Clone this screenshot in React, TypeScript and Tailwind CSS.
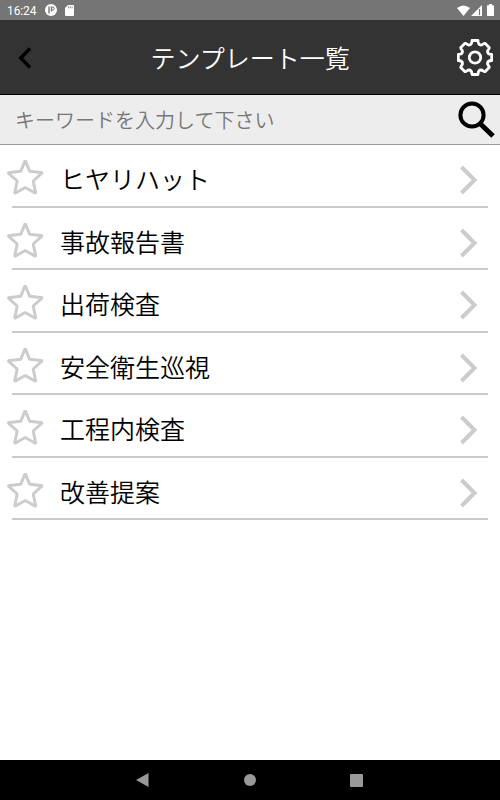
const templates = [
  { id: 1, title: "ヒヤリハット" },
  { id: 2, title: "事故報告書" },
  { id: 3, title: "出荷検査" },
  { id: 4, title: "安全衛生巡視" },
  { id: 5, title: "工程内検査" },
  { id: 6, title: "改善提案" },
];

const StatusBar = () => (
  <div className="flex h-5 items-center bg-[#757575] pl-[7px] pr-[6px] text-white">
    <span className="w-[29px] pt-0.5 font-[Roboto] text-[12px] leading-[18px] tracking-[-0.1px]">16:24</span>
    <svg className="ml-[9px]" width="12" height="12" viewBox="0 0 12 12">
      <circle cx="6" cy="6" r="6" fill="#fff" />
      <path d="M4 2.500v7M6.500 2.500v5" fill="none" stroke="#757575" strokeWidth="1.400" />
      <path d="M6.500 3h1.300a1.500 1.500 0 0 1 0 3H6.500" fill="none" stroke="#757575" strokeWidth="1" />
    </svg>
    <svg className="ml-2" width="9" height="11" viewBox="0 0 9 11">
      <path d="M3 0h5a1 1 0 0 1 1 1v9a1 1 0 0 1-1 1H1a1 1 0 0 1-1-1V3z" fill="#fff" />
      <path d="M3.500 1.300v2M5.300 1.300v2M7.100 1.300v2" stroke="#757575" strokeWidth=".8" />
    </svg>
    <svg className="ml-auto" width="13" height="11" viewBox="0 0 13 11">
      <path d="M6.500 11 0 3Q6.500-2 13 3z" fill="#fff" />
    </svg>
    <svg className="ml-px" width="11" height="11" viewBox="0 0 11 11">
      <path d="M11 0v11H0z" fill="#fff" />
      <path d="M8.500 4v6" stroke="#757575" strokeWidth="1.200" />
    </svg>
    <svg className="ml-[5px]" width="7" height="12" viewBox="0 0 7 12">
      <path d="M2 0h3v1.300h1.300q.7 0 .7.7v9.300q0 .7-.7.7H.7q-.7 0-.7-.7V2q0-.7.7-.7H2z" fill="#fff" />
    </svg>
  </div>
);

const Header = () => (
  <header className="flex h-[75px] items-center border-b border-black bg-[#333] pl-[18px] pr-[7px]">
    <svg className="mt-px" width="32" height="22" viewBox="0 0 32 22">
      <path d="M12 1.500 2.700 11l9.300 9.500" fill="none" stroke="#000" strokeWidth="3.400" />
    </svg>
    <h1 className="ml-[100.5px] text-[25px] font-[350] leading-9 text-white">テンプレート一覧</h1>
    <svg
      className="ml-auto mt-px"
      width="36"
      height="37"
      viewBox="-18 -18.500 36 37"
      fill="none"
      stroke="#fff"
      strokeWidth="2.800"
      strokeLinejoin="round"
    >
      <path d="M-3-17H3Q3.200-12.500 6-12.500C8-12.500 8.500-14.500 10-14.200L14.200-10C14.500-8.500 12.500-8 12.500-6Q12.500-3.200 16.700-3V3Q12.500 3.200 12.500 6C12.500 8 14.500 8.500 14.200 10L10 14.200C8.500 14.500 8 12.500 6 12.500Q3.200 12.500 3 17H-3Q-3.200 12.500-6 12.500C-8 12.500-8.500 14.500-10 14.200L-14.200 10C-14.500 8.500-12.500 8-12.500 6Q-12.500 3.200-16.700 3V-3Q-12.500-3.200-12.500-6C-12.500-8-14.500-8.500-14.200-10L-10-14.200C-8.500-14.500-8-12.500-6-12.500Q-3.200-12.500-3-17Z" />
      <circle r="5.700" />
    </svg>
  </header>
);

const SearchBar = () => (
  <div className="flex h-[50px] items-center justify-between border-b border-[#999] bg-[#ededed] pl-[15px] pr-[5px]">
    <span className="text-[20px] font-[350] text-[#777]">キーワードを入力して下さい</span>
    <svg width="37" height="38" viewBox="0 0 37 38" fill="none" stroke="#000">
      <circle cx="14" cy="14" r="11.600" strokeWidth="4" />
      <path d="m22.500 23 12.500 12" strokeWidth="5" />
    </svg>
  </div>
);

const TemplateRow = ({ title }: { title: string }) => (
  <li className="h-[62.5px]">
    <div className="flex h-[60.5px] items-center pl-[6px] pr-[22px] pt-[6px]">
      <svg
        className="-mt-[2px]"
        width="38"
        height="38"
        viewBox="0 0 38 38"
        fill="none"
        stroke="#ccc"
        strokeWidth="3"
        strokeLinejoin="bevel"
      >
        <path d="M19.200 2.500 23.700 13.300 36.500 14.700 27.200 23 29.800 35.500 19.200 29.500 8.600 35.500 11.200 23 1.900 14.700 14.700 13.300Z" />
      </svg>
      <span className="ml-4 text-[25px] font-[350] leading-9 text-black">{title}</span>
      <svg className="ml-auto mt-[4px]" width="19" height="30" viewBox="0 0 19 30">
        <path d="m2.500 2 13 13-13 13" fill="none" stroke="#ccc" strokeWidth="4" />
      </svg>
    </div>
    <div className="mx-3 h-[2px] bg-[#cacaca]" />
  </li>
);

const NavigationBar = () => (
  <nav className="flex h-10 items-center justify-between bg-black pl-[136px] pr-[137px]">
    <svg width="13" height="14" viewBox="0 0 13 14">
      <path d="M0 7 12.500 0v14z" fill="#999" />
    </svg>
    <div className="size-3 rounded-full bg-[#999]" />
    <div className="size-[13px] rounded-[1px] bg-[#999]" />
  </nav>
);

const App = () => {
  return (
    <div className="flex h-[800px] w-[500px] flex-col overflow-hidden bg-white font-['Noto_Sans_CJK_JP',sans-serif]">
      <StatusBar />
      <Header />
      <SearchBar />
      <ul className="flex-1">
        {templates.map((item) => (
          <TemplateRow key={item.id} title={item.title} />
        ))}
      </ul>
      <NavigationBar />
    </div>
  );
};

export default App;
